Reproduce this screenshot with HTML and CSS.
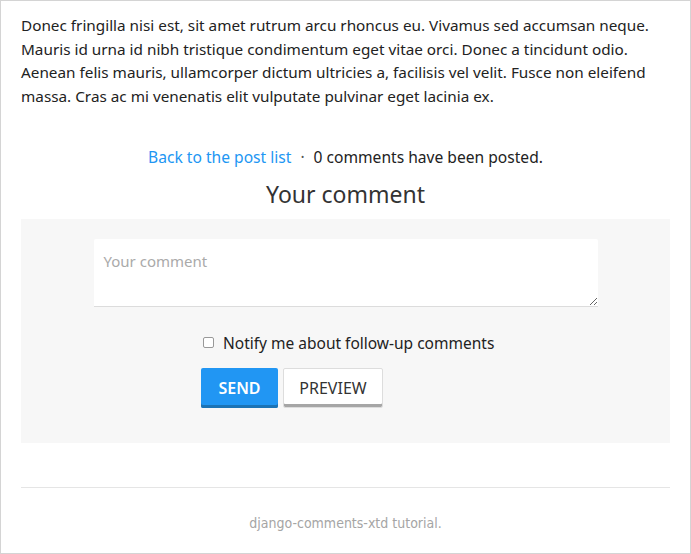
FILE: index.html
```html
<!DOCTYPE html>
<html>
<head>
<meta charset="utf-8">
<link rel="stylesheet" href="styles.css">
</head>
<body>
<div class="frame">
  <p class="post">Donec fringilla nisi est, sit amet rutrum arcu rhoncus eu. Vivamus sed accumsan neque. Mauris id urna id nibh tristique condimentum eget vitae orci. Donec a tincidunt odio. Aenean felis mauris, ullamcorper dictum ultricies a, facilisis vel velit. Fusce non eleifend massa. Cras ac mi venenatis elit vulputate pulvinar eget lacinia ex.</p>
  <div class="meta"><a href="#" class="back">Back to the post list</a><span class="dot">&middot;</span>0 comments have been posted.</div>
  <h3 class="heading">Your comment</h3>
  <div class="form-box">
    <textarea class="comment" placeholder="Your comment"></textarea>
    <div class="controls">
      <label class="notify"><span class="check"></span>Notify me about follow-up comments</label>
      <div class="buttons">
        <button class="btn btn-send">SEND</button>
        <button class="btn btn-preview">PREVIEW</button>
      </div>
    </div>
  </div>
  <hr class="rule">
  <div class="footer">django-comments-xtd tutorial.</div>
</div>
</body>
</html>
```
FILE: styles.css
```css
* { box-sizing: border-box; }
html, body { margin: 0; padding: 0; background: #fff; }
body {
  font-family: "Noto Sans", "Open Sans", sans-serif;
  color: #222;
}
.frame {
  width: 691px;
  height: 554px;
  border: 1px solid #d4d4d4;
  padding: 0 20px;
  overflow: hidden;
}
.post {
  margin: 13px 0 0;
  font-size: 15.3px;
  line-height: 23.7px;
  color: #222;
}
.meta {
  margin-top: 37px;
  text-align: center;
  font-size: 15.6px;
  line-height: 22px;
  color: #222;
}
.back { color: #2196f3; text-decoration: none; }
.dot { margin: 0 9px; color: #555; }
.heading {
  margin: 9px 0 0;
  text-align: center;
  font-size: 23px;
  font-weight: 400;
  line-height: 34px;
  color: #333;
}
.form-box {
  margin-top: 8px;
  background: #f7f7f7;
  padding: 20px 0 35px;
}
.comment {
  display: block;
  width: 504px;
  height: 68px;
  margin: 0 auto;
  border: none;
  border-bottom: 1px solid #dcdcdc;
  border-radius: 2px 2px 0 0;
  background: #fff;
  padding: 12px 10px;
  font-family: inherit;
  font-size: 15px;
  color: #333;
  resize: vertical;
  outline: none;
}
.comment::placeholder { color: #aaa; }
.controls {
  padding-left: 180px;
  margin-top: 25px;
}
.notify {
  display: flex;
  align-items: center;
  gap: 9px;
  font-size: 15.5px;
  line-height: 22px;
  color: #222;
  padding-left: 2px;
}
.check {
  width: 11px;
  height: 11px;
  border: 1px solid #999;
  border-radius: 2px;
  background: #fff;
}
.buttons {
  display: flex;
  gap: 5px;
  margin-top: 14px;
}
.btn {
  height: 40px;
  border: none;
  border-radius: 2px;
  font-family: inherit;
  font-size: 16px;
  padding: 0;
}
.btn-send {
  width: 77px;
  background: #2196f3;
  color: #fff;
  font-weight: 600;
  box-shadow: inset 0 -3px 0 #1b73b5;
}
.btn-preview {
  width: 100px;
  background: #fff;
  color: #333;
  border: 1px solid #ddd;
  box-shadow: inset 0 -3px 0 #a6a6a6;
}
.rule {
  margin: 44px 0 0;
  border: none;
  border-top: 1px solid #e5e5e5;
}
.footer {
  margin-top: 27px;
  text-align: center;
  font-family: "Liberation Sans Narrow", "DejaVu Sans Condensed", sans-serif;
  font-size: 14px;
  color: #a5a5a5;
}
```
